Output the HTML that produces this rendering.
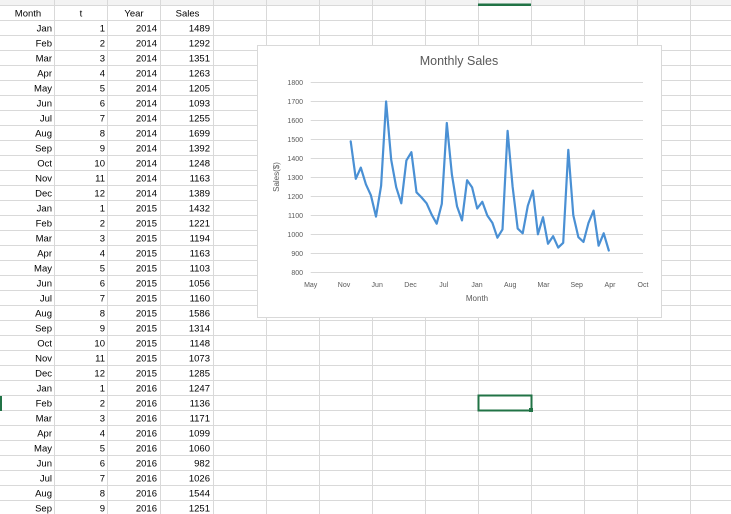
<!DOCTYPE html>
<html><head><meta charset="utf-8"><style>
html,body{margin:0;padding:0;background:#fff;}
svg{display:block;font-family:"Liberation Sans",sans-serif;}
</style></head><body>
<svg width="731" height="514" viewBox="0 0 731 514" xmlns="http://www.w3.org/2000/svg">
<rect x="0" y="0" width="731" height="5" fill="#f3f3f3"/>
<g stroke="#d9d9d9" stroke-width="1">
<path d="M0 5.5H731M0 20.5H731M0 35.5H731M0 50.5H731M0 65.5H731M0 80.5H731M0 95.5H731M0 110.5H731M0 125.5H731M0 140.5H731M0 155.5H731M0 170.5H731M0 185.5H731M0 200.5H731M0 215.5H731M0 230.5H731M0 245.5H731M0 260.5H731M0 275.5H731M0 290.5H731M0 305.5H731M0 320.5H731M0 335.5H731M0 350.5H731M0 365.5H731M0 380.5H731M0 395.5H731M0 410.5H731M0 425.5H731M0 440.5H731M0 455.5H731M0 470.5H731M0 485.5H731M0 500.5H731"/>
<path d="M54.5 0V514M107.5 0V514M160.5 0V514M213.5 0V514M266.5 0V514M319.5 0V514M372.5 0V514M425.5 0V514M478.5 0V514M531.5 0V514M584.5 0V514M637.5 0V514M690.5 0V514"/>
</g>
<rect x="478" y="3.5" width="53" height="2.5" fill="#217346"/>
<rect x="0" y="396" width="2" height="15" fill="#217346"/>
<rect x="478.5" y="395.5" width="53" height="15" fill="none" stroke="#217346" stroke-width="2"/>
<rect x="529" y="408" width="4" height="4" fill="#217346"/>
<g font-size="9.5" fill="#000">
<g text-anchor="middle"><text x="28" y="16.5">Month</text><text x="81" y="16.5">t</text><text x="134" y="16.5">Year</text><text x="187.5" y="16.5">Sales</text></g>
</g>
<g font-size="9.5" text-anchor="end">
<text x="52" y="31.5">Jan</text><text x="105" y="31.5">1</text><text x="157" y="31.5">2014</text><text x="210" y="31.5">1489</text>
<text x="52" y="46.5">Feb</text><text x="105" y="46.5">2</text><text x="157" y="46.5">2014</text><text x="210" y="46.5">1292</text>
<text x="52" y="61.5">Mar</text><text x="105" y="61.5">3</text><text x="157" y="61.5">2014</text><text x="210" y="61.5">1351</text>
<text x="52" y="76.5">Apr</text><text x="105" y="76.5">4</text><text x="157" y="76.5">2014</text><text x="210" y="76.5">1263</text>
<text x="52" y="91.5">May</text><text x="105" y="91.5">5</text><text x="157" y="91.5">2014</text><text x="210" y="91.5">1205</text>
<text x="52" y="106.5">Jun</text><text x="105" y="106.5">6</text><text x="157" y="106.5">2014</text><text x="210" y="106.5">1093</text>
<text x="52" y="121.5">Jul</text><text x="105" y="121.5">7</text><text x="157" y="121.5">2014</text><text x="210" y="121.5">1255</text>
<text x="52" y="136.5">Aug</text><text x="105" y="136.5">8</text><text x="157" y="136.5">2014</text><text x="210" y="136.5">1699</text>
<text x="52" y="151.5">Sep</text><text x="105" y="151.5">9</text><text x="157" y="151.5">2014</text><text x="210" y="151.5">1392</text>
<text x="52" y="166.5">Oct</text><text x="105" y="166.5">10</text><text x="157" y="166.5">2014</text><text x="210" y="166.5">1248</text>
<text x="52" y="181.5">Nov</text><text x="105" y="181.5">11</text><text x="157" y="181.5">2014</text><text x="210" y="181.5">1163</text>
<text x="52" y="196.5">Dec</text><text x="105" y="196.5">12</text><text x="157" y="196.5">2014</text><text x="210" y="196.5">1389</text>
<text x="52" y="211.5">Jan</text><text x="105" y="211.5">1</text><text x="157" y="211.5">2015</text><text x="210" y="211.5">1432</text>
<text x="52" y="226.5">Feb</text><text x="105" y="226.5">2</text><text x="157" y="226.5">2015</text><text x="210" y="226.5">1221</text>
<text x="52" y="241.5">Mar</text><text x="105" y="241.5">3</text><text x="157" y="241.5">2015</text><text x="210" y="241.5">1194</text>
<text x="52" y="256.5">Apr</text><text x="105" y="256.5">4</text><text x="157" y="256.5">2015</text><text x="210" y="256.5">1163</text>
<text x="52" y="271.5">May</text><text x="105" y="271.5">5</text><text x="157" y="271.5">2015</text><text x="210" y="271.5">1103</text>
<text x="52" y="286.5">Jun</text><text x="105" y="286.5">6</text><text x="157" y="286.5">2015</text><text x="210" y="286.5">1056</text>
<text x="52" y="301.5">Jul</text><text x="105" y="301.5">7</text><text x="157" y="301.5">2015</text><text x="210" y="301.5">1160</text>
<text x="52" y="316.5">Aug</text><text x="105" y="316.5">8</text><text x="157" y="316.5">2015</text><text x="210" y="316.5">1586</text>
<text x="52" y="331.5">Sep</text><text x="105" y="331.5">9</text><text x="157" y="331.5">2015</text><text x="210" y="331.5">1314</text>
<text x="52" y="346.5">Oct</text><text x="105" y="346.5">10</text><text x="157" y="346.5">2015</text><text x="210" y="346.5">1148</text>
<text x="52" y="361.5">Nov</text><text x="105" y="361.5">11</text><text x="157" y="361.5">2015</text><text x="210" y="361.5">1073</text>
<text x="52" y="376.5">Dec</text><text x="105" y="376.5">12</text><text x="157" y="376.5">2015</text><text x="210" y="376.5">1285</text>
<text x="52" y="391.5">Jan</text><text x="105" y="391.5">1</text><text x="157" y="391.5">2016</text><text x="210" y="391.5">1247</text>
<text x="52" y="406.5">Feb</text><text x="105" y="406.5">2</text><text x="157" y="406.5">2016</text><text x="210" y="406.5">1136</text>
<text x="52" y="421.5">Mar</text><text x="105" y="421.5">3</text><text x="157" y="421.5">2016</text><text x="210" y="421.5">1171</text>
<text x="52" y="436.5">Apr</text><text x="105" y="436.5">4</text><text x="157" y="436.5">2016</text><text x="210" y="436.5">1099</text>
<text x="52" y="451.5">May</text><text x="105" y="451.5">5</text><text x="157" y="451.5">2016</text><text x="210" y="451.5">1060</text>
<text x="52" y="466.5">Jun</text><text x="105" y="466.5">6</text><text x="157" y="466.5">2016</text><text x="210" y="466.5">982</text>
<text x="52" y="481.5">Jul</text><text x="105" y="481.5">7</text><text x="157" y="481.5">2016</text><text x="210" y="481.5">1026</text>
<text x="52" y="496.5">Aug</text><text x="105" y="496.5">8</text><text x="157" y="496.5">2016</text><text x="210" y="496.5">1544</text>
<text x="52" y="511.5">Sep</text><text x="105" y="511.5">9</text><text x="157" y="511.5">2016</text><text x="210" y="511.5">1251</text>
</g>
<rect x="257.5" y="45.5" width="404" height="272" fill="#fff" stroke="#d9d9d9"/>
<text x="459" y="65" font-size="12.5" fill="#595959" text-anchor="middle">Monthly Sales</text>
<g stroke="#d9d9d9" stroke-width="1">
<path d="M310.7 82.5H643M310.7 101.5H643M310.7 120.5H643M310.7 139.5H643M310.7 158.5H643M310.7 177.5H643M310.7 196.5H643M310.7 215.5H643M310.7 234.5H643M310.7 253.5H643M310.7 272.5H643"/>
</g>
<g font-size="7" fill="#595959" text-anchor="end">
<text x="303" y="85">1800</text><text x="303" y="104">1700</text><text x="303" y="123">1600</text><text x="303" y="142">1500</text><text x="303" y="161">1400</text><text x="303" y="180">1300</text><text x="303" y="199">1200</text><text x="303" y="218">1100</text><text x="303" y="237">1000</text><text x="303" y="256">900</text><text x="303" y="275">800</text>
</g>
<g font-size="7" fill="#595959" text-anchor="middle">
<text x="310.7" y="287">May</text><text x="344" y="287">Nov</text><text x="377.2" y="287">Jun</text><text x="410.5" y="287">Dec</text><text x="443.7" y="287">Jul</text><text x="477" y="287">Jan</text><text x="510.2" y="287">Aug</text><text x="543.5" y="287">Mar</text><text x="576.7" y="287">Sep</text><text x="610" y="287">Apr</text><text x="643" y="287">Oct</text>
</g>
<text x="477" y="301" font-size="8" fill="#595959" text-anchor="middle">Month</text>
<text transform="translate(279 177) rotate(-90)" font-size="8" fill="#595959" text-anchor="middle">Sales($)</text>
<polyline fill="none" stroke="#4a90d4" stroke-width="2.2" stroke-linejoin="round" stroke-linecap="round" points="350.7,141.4 355.8,178.8 360.8,167.6 365.9,184.3 370.9,195.3 376,216.6 381.1,185.8 386.1,101.5 391.2,159.8 396.2,187.2 401.3,203.3 406.4,160.4 411.4,152.2 416.5,192.3 421.5,197.4 426.6,203.3 431.7,214.7 436.7,223.7 441.8,203.9 446.8,123 451.9,174.6 457,206.2 462,220.4 467.1,180.2 472.1,187.4 477.2,208.5 482.3,201.8 487.3,215.5 492.4,222.9 497.4,237.7 502.5,229.4 507.6,130.9 512.6,186.6 517.7,228.6 522.7,233.3 527.8,205.8 532.9,190.6 537.9,234.3 543,217.2 548,243.8 553.1,236.2 558.2,247.6 563.2,242.8 568.3,149.8 573.3,215.3 578.4,237.2 583.5,241.9 588.5,222.9 593.6,210.6 598.6,245.7 603.7,233.3 608.8,250.5"/>
</svg>
</body></html>
